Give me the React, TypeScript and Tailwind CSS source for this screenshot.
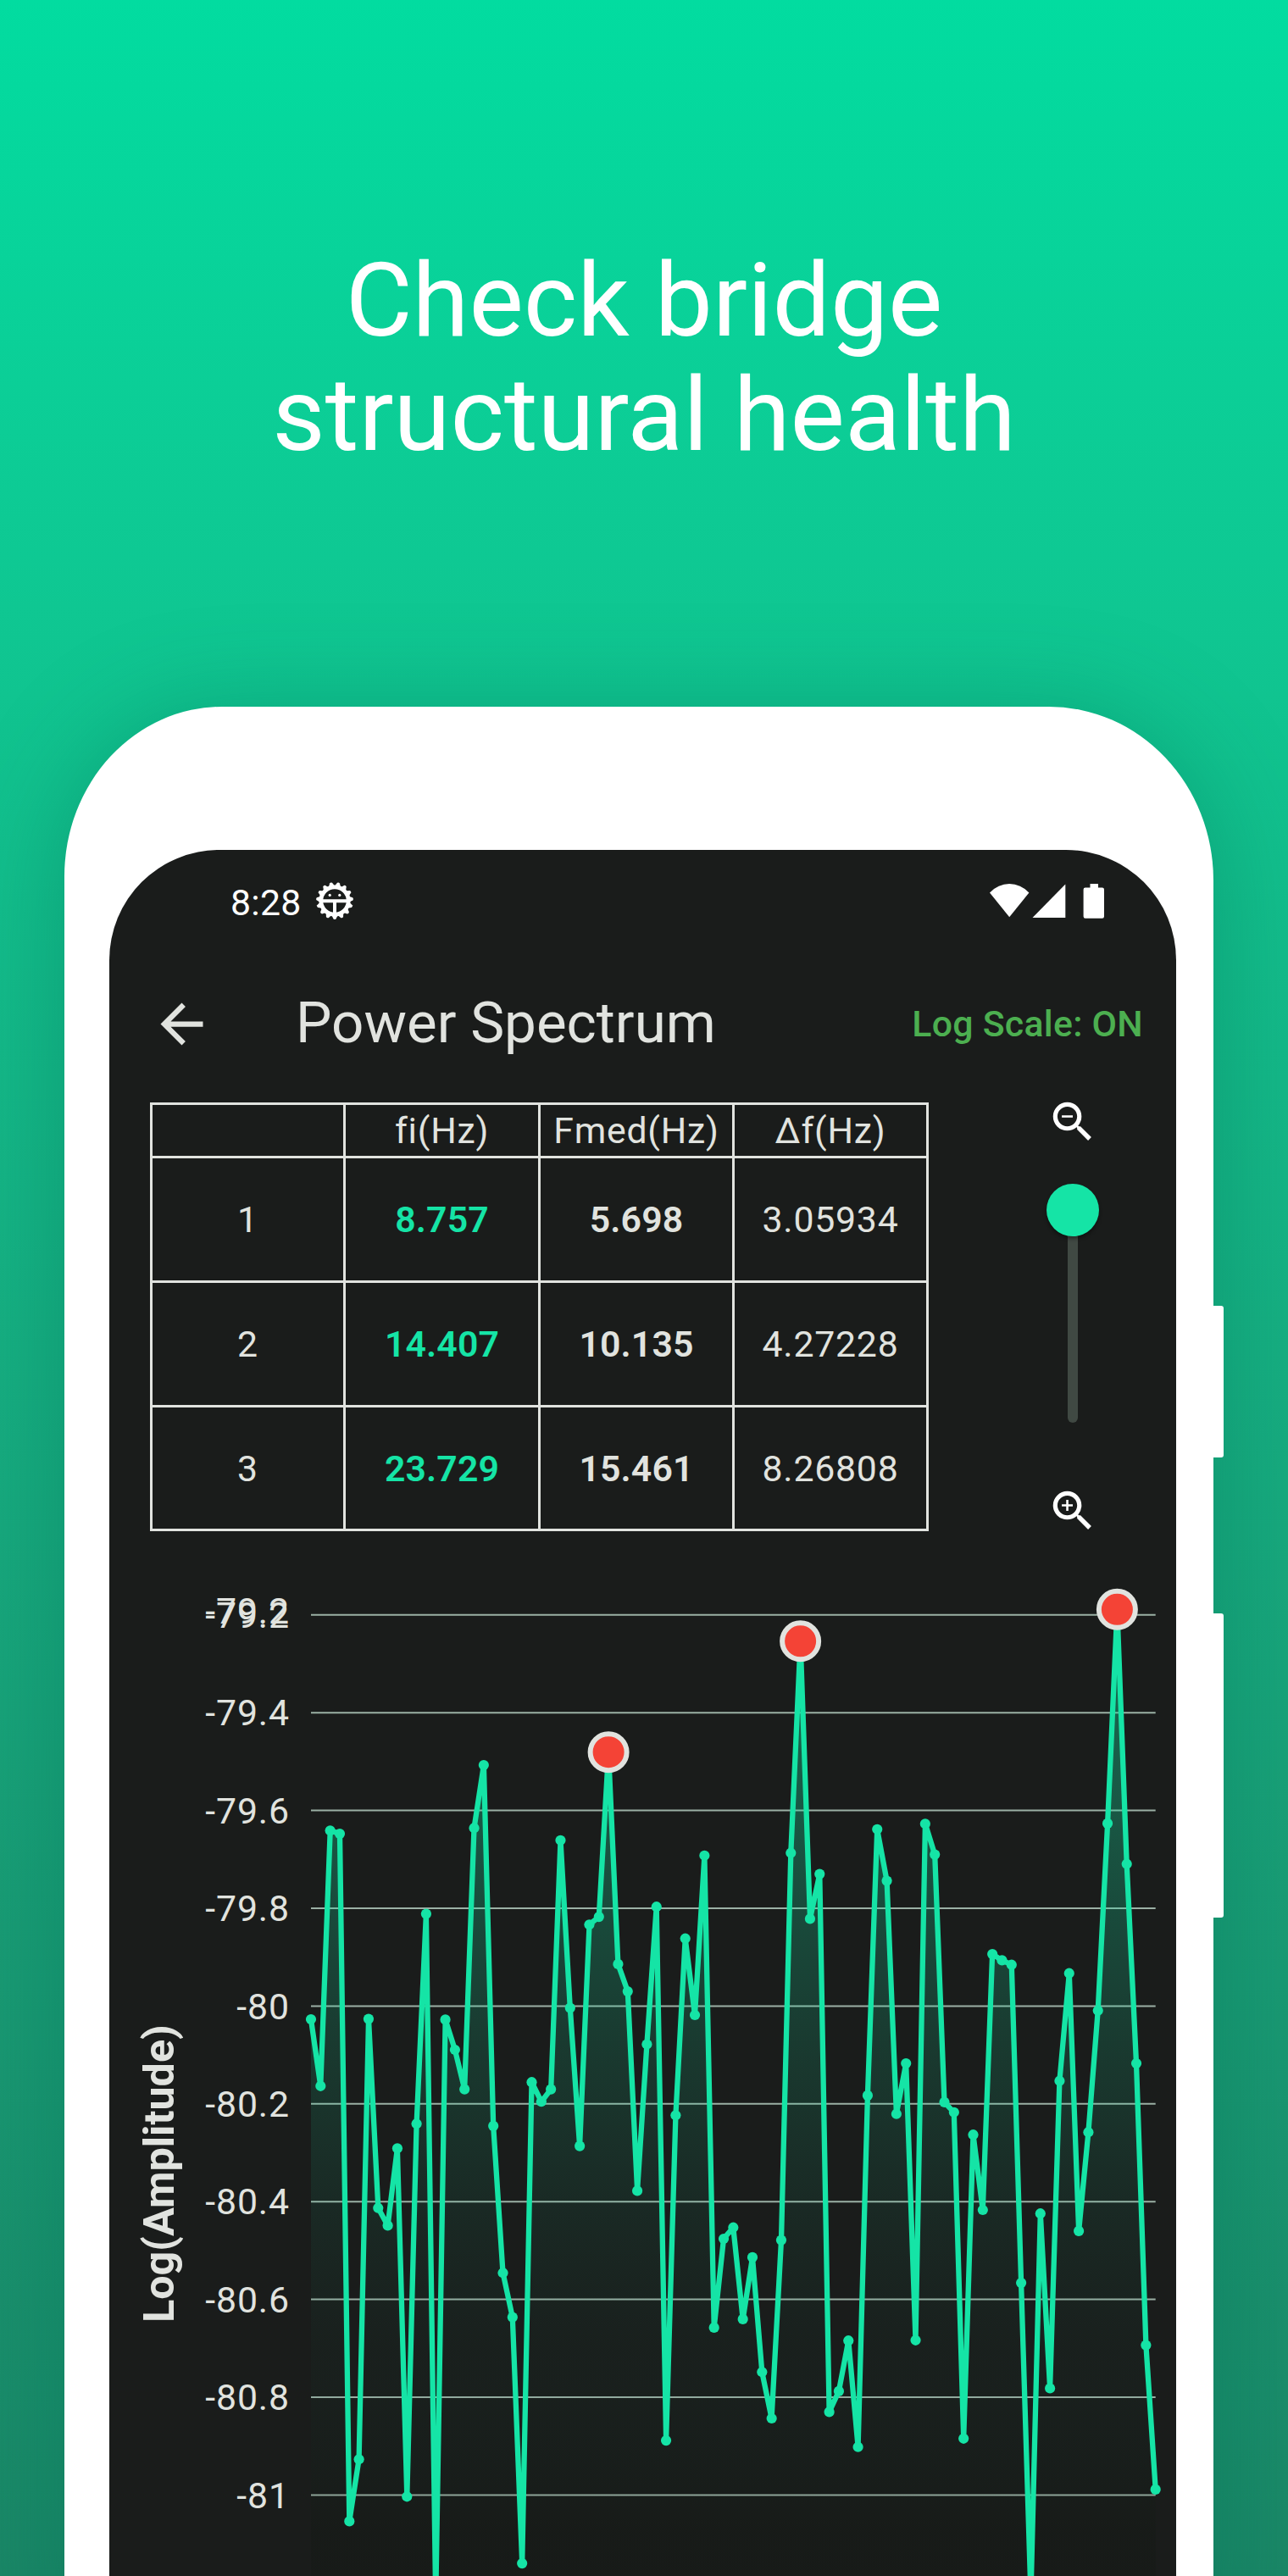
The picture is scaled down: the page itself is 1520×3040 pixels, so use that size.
import React from "react";

const GREEN = "#15e4a6";

const ROWS = [
  ["1", "8.757", "5.698", "3.05934"],
  ["2", "14.407", "10.135", "4.27228"],
  ["3", "23.729", "15.461", "8.26808"],
];

const TICKS = ["-79.2", "-79.4", "-79.6", "-79.8", "-80", "-80.2", "-80.4", "-80.6", "-80.8", "-81"];

const LEVELS = [
  543, 621.8, 320.3, 324.1, 1135.4, 1062.3, 542.6, 765.7, 786.4, 695.3, 1106.3, 666.2, 418.6, 1230, 543.4, 579, 625.6,
  317.2, 243, 668.9, 842.2, 894.6, 1185.1, 617.2, 640.2, 625.6, 331.8, 529.6, 692.6, 431.3, 422.1, 227.7, 477.9, 510.1,
  745.4, 572.5, 410.2, 1040.1, 656.3, 447.7, 538, 349.8, 906.9, 802, 788.7, 896.9, 823.9, 959.3, 1014, 803.6, 346.7,
  96.8, 424.4, 371.6, 1006.4, 981.9, 922.2, 1047.7, 632.9, 318.8, 379.6, 654.7, 595, 921.8, 312.3, 348.6, 640.9, 652.8,
  1037.8, 679.2, 768, 466.1, 473.4, 478.7, 854.1, 1224, 772.2, 978.5, 615.7, 488.7, 792.9, 676.2, 532.7, 311.9, 59.3,
  359.7, 595, 927.6, 1097.9,
];
const PEAKS = [31, 51, 84];
const LEFT = 21;
const STEP = 11.326;
const POINTS = LEVELS.map((y, i) => ({ x: LEFT + i * STEP, y }));
const LINE = POINTS.map((p) => `${p.x.toFixed(1)},${p.y}`).join(" ");
const AREA = `${LEFT},1240 ${LINE} ${(LEFT + 88 * STEP).toFixed(1)},1240`;

function DebugIcon() {
  const teeth = Array.from({ length: 15 }, (_, i) => i * 24 + 180);
  return (
    <svg className="size-[44px]" viewBox="-22 -22 44 44" fill="none">
      <circle r="16.2" stroke="#fff" strokeWidth="4.8" />
      {teeth.map((a) => (
        <path key={a} d="M-3.6 -17 L-1.5 -21.4 Q0 -22.6 1.5 -21.4 L3.6 -17Z" fill="#fff" transform={`rotate(${a})`} />
      ))}
      <path d="M-15 0.2H15M0 0.2V16" stroke="#fff" strokeWidth="4" />
      <circle cx="-5.8" cy="-6.6" r="1.6" fill="#fff" />
      <circle cx="5.8" cy="-6.6" r="1.6" fill="#fff" />
    </svg>
  );
}

function ZoomIcon({ plus }: { plus?: boolean }) {
  return (
    <svg className="size-[62px]" viewBox="0 0 24 24" fill="#fff">
      <path d="M15.5 14h-.79l-.28-.27A6.471 6.471 0 0 0 16 9.5 6.5 6.5 0 1 0 9.5 16c1.61 0 3.09-.59 4.23-1.57l.27.28v.79l5 4.99L20.49 19l-4.99-5zm-6 0C7.01 14 5 11.99 5 9.5S7.01 5 9.5 5 14 7.01 14 9.5 11.99 14 9.5 14z" />
      <path d={plus ? "M12 10h-2v2H9v-2H7V9h2V7h1v2h2v1z" : "M7 9h5v1H7z"} />
    </svg>
  );
}

function StatusBar() {
  return (
    <div className="flex h-[44px] items-center pl-[143px] pr-[84px] text-[42.8px] text-white">
      <span className="mt-[3px] w-[101px] leading-[44px] tracking-[0.3px]">8:28</span>
      <DebugIcon />
      <svg className="ml-auto h-[42px] w-[136px]" viewBox="0 0 136 42" fill="#fff">
        <path d="M0 11.5Q10 1 23.2 1T46.4 11.5L23.2 40.3Z" />
        <path d="M89.3 1.5V41H50.5Z" />
        <path d="M118.5 1h9.5v4.6h4.8q2.2 0 2.2 2.2v31.6q0 2.4-2.2 2.4h-20q-2.2 0-2.2-2.4V7.8q0-2.2 2.2-2.2h5.7z" />
      </svg>
    </div>
  );
}

function AppBar() {
  return (
    <div className="mt-[79px] flex h-[88px] items-center pl-[48px] pr-[39px] text-[#e1e3df]">
      <svg className="size-[75px]" viewBox="0 0 24 24" fill="currentColor">
        <path d="M20 11H7.83l5.59-5.59L12 4l-8 8 8 8 1.41-1.41L7.83 13H20v-2z" />
      </svg>
      <h2 className="-mt-[3px] ml-[97px] text-[67.3px] leading-[88px]">Power Spectrum</h2>
      <span className="ml-auto text-[42.8px] font-medium leading-[88px] tracking-[0.27px] text-[#4caf50]">
        Log Scale: ON
      </span>
    </div>
  );
}

function ResultsTable() {
  return (
    <div className="grid w-[919px] grid-cols-[225px_227px_226px_226px] grid-rows-[60px_144px_144px_143px] gap-[3px] bg-[#e1e3df] p-[3px] text-[42.8px] leading-[50px] tracking-[0.77px] text-[#e1e3df]">
      {["", "fi(Hz)", "Fmed(Hz)", "Δf(Hz)"].map((h) => (
        <div key={h} className="flex items-center justify-center bg-[#1a1c1b]">
          {h}
        </div>
      ))}
      {ROWS.map(([n, fi, med, df]) => (
        <React.Fragment key={n}>
          <div className="flex items-center justify-center bg-[#1a1c1b]">{n}</div>
          <div className="flex items-center justify-center bg-[#1a1c1b] font-semibold tracking-[0.1px] text-[#15e4a6]">
            {fi}
          </div>
          <div className="flex items-center justify-center bg-[#1a1c1b] font-semibold tracking-[0.1px]">{med}</div>
          <div className="flex items-center justify-center bg-[#1a1c1b]">{df}</div>
        </React.Fragment>
      ))}
    </div>
  );
}

function ZoomSlider() {
  return (
    <div className="-mt-[8px] ml-[139px] flex w-[62px] flex-col items-center">
      <ZoomIcon />
      <div className="mt-[42px] flex h-[282px] w-[62px] flex-col items-center">
        <div className="z-10 size-[62px] shrink-0 rounded-full bg-[#15e4a6] shadow-[0_3px_4px_rgba(0,0,0,0.4)]" />
        <div className="-mt-[10px] w-[12.5px] flex-1 rounded-b-full bg-[#404943]" />
      </div>
      <div className="mt-[73px]">
        <ZoomIcon plus />
      </div>
    </div>
  );
}

function Chart() {
  return (
    <div className="mt-[26px] flex h-[1200px]">
      <div className="flex w-[118px] justify-center pt-[549px]">
        <span className="h-[352px] rotate-180 text-[50.3px] font-bold leading-[58px] [writing-mode:vertical-rl]">
          Log(Amplitude)
        </span>
      </div>
      <div className="relative w-[95px] text-[42.8px] leading-[50px] tracking-[0.9px]">
        <span className="absolute right-0 top-[36px]">-79.2</span>
        <div className="flex flex-col items-end gap-[65.4px] pt-[41px]">
          {TICKS.map((t) => (
            <span key={t} className="block h-[50px] whitespace-nowrap">
              {t}
            </span>
          ))}
        </div>
      </div>
      <svg className="ml-[4px] h-[1200px] w-[1042px] shrink-0" viewBox="0 0 1042 1200">
        <defs>
          <linearGradient id="area" gradientUnits="userSpaceOnUse" x1="0" y1="59" x2="0" y2="1150">
            <stop offset="0" stopColor={GREEN} stopOpacity="0.42" />
            <stop offset="0.3" stopColor={GREEN} stopOpacity="0.25" />
            <stop offset="0.47" stopColor={GREEN} stopOpacity="0.15" />
            <stop offset="0.64" stopColor={GREEN} stopOpacity="0.07" />
            <stop offset="0.8" stopColor="#0f6a4c" stopOpacity="0.05" />
            <stop offset="1" stopColor="#001000" stopOpacity="0.1" />
          </linearGradient>
        </defs>
        {TICKS.map((t, i) => (
          <line key={t} x1={LEFT} x2="1017.7" y1={65.8 + i * 115.4} y2={65.8 + i * 115.4} stroke="#9bb0a5" strokeWidth="2" />
        ))}
        <polygon points={AREA} fill="url(#area)" />
        <polyline points={LINE} fill="none" stroke={GREEN} strokeWidth="6.3" strokeLinejoin="round" />
        {POINTS.map((p, i) =>
          PEAKS.includes(i) ? (
            <circle key={i} cx={p.x} cy={p.y} r="21.5" fill="#f44336" stroke="#e1e3df" strokeWidth="6" />
          ) : (
            <circle key={i} cx={p.x} cy={p.y} r="6.1" fill={GREEN} />
          ),
        )}
      </svg>
    </div>
  );
}

export default function App() {
  return (
    <main className="h-[3040px] w-[1520px] overflow-hidden bg-linear-to-b from-[#02dca0] to-[#1a8666] font-['Roboto',sans-serif]">
      <h1 className="h-[834px] pt-[287px] text-center text-[121.3px] leading-[135px] text-white">
        Check bridge
        <br />
        structural health
      </h1>
      <div className="flex">
        <div className="ml-[76px] h-[2300px] w-[1356px] shrink-0 rounded-tl-[186px_200px] rounded-tr-[194px_205px] bg-white pl-[53px] pt-[169px] shadow-[0_10px_120px_rgba(5,115,88,0.4)]">
          <div className="h-[2200px] w-[1259px] overflow-hidden rounded-t-[130px] bg-[#1a1c1b] pt-[38px] text-[#e1e3df]">
            <StatusBar />
            <AppBar />
            <div className="mt-[49px] flex items-start pl-[48px]">
              <ResultsTable />
              <ZoomSlider />
            </div>
            <Chart />
          </div>
        </div>
        <div className="flex flex-col pt-[707px]">
          <div className="h-[179px] w-[12px] rounded-r-[3px] bg-white" />
          <div className="mt-[184px] h-[359px] w-[12px] rounded-r-[3px] bg-white" />
        </div>
      </div>
    </main>
  );
}
